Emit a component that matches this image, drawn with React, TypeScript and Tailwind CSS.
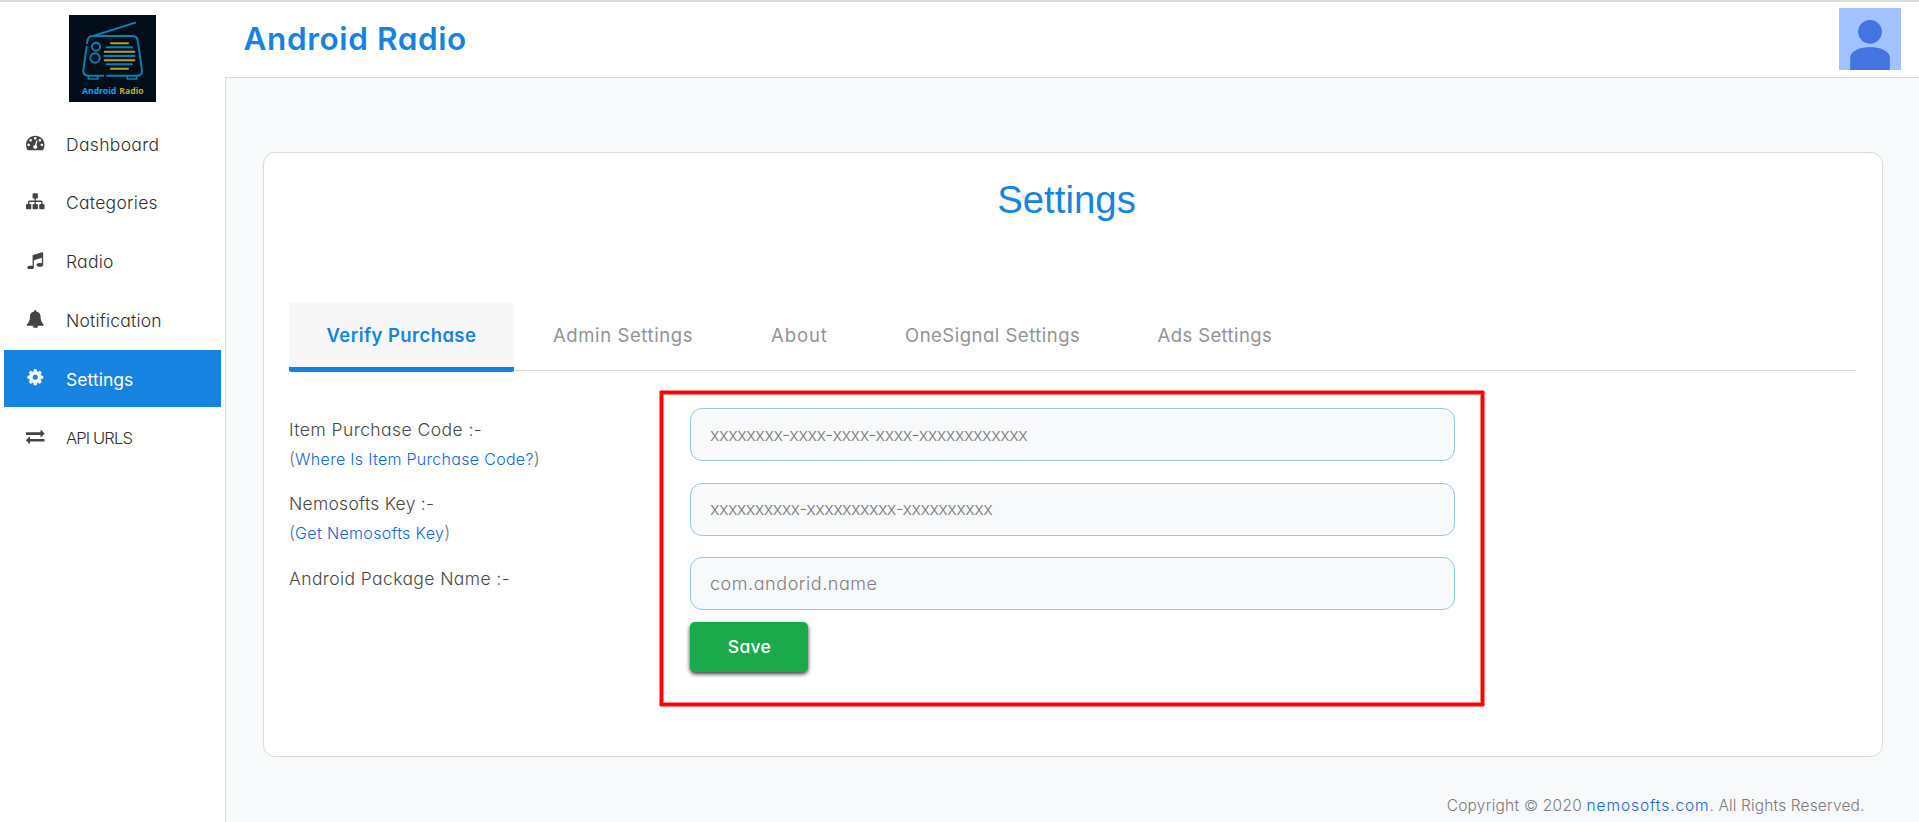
interface NavItem {
  label: string;
  track: string;
  icon: string;
  active?: boolean;
}

const NAV: NavItem[] = [
  { label: "Dashboard", track: "text-[17.500px] tracking-[0.33px]", icon: "M384 1152q0-53-37.5-90.5t-90.5-37.5-90.5 37.5-37.5 90.5 37.5 90.5 90.5 37.5 90.5-37.5 37.5-90.5zm192-448q0-53-37.5-90.5t-90.5-37.5-90.5 37.5-37.5 90.5 37.5 90.5 90.5 37.5 90.5-37.5 37.5-90.5zm428 481l101-382q6-26-7.5-48.5t-38.5-29.5-48 6.5-30 39.5l-101 382q-60 5-107 43.5t-63 98.5q-20 77 20 146t117 89 146-20 89-117q16-60-6-117t-72-91zm660-33q0-53-37.5-90.5t-90.5-37.5-90.5 37.5-37.5 90.5 37.5 90.5 90.5 37.5 90.5-37.5 37.5-90.5zm-640-640q0-53-37.5-90.5t-90.5-37.5-90.5 37.5-37.5 90.5 37.5 90.5 90.5 37.5 90.5-37.5 37.5-90.5zm448 192q0-53-37.5-90.5t-90.5-37.5-90.5 37.5-37.5 90.5 37.5 90.5 90.5 37.5 90.5-37.5 37.5-90.5zm320 448q0 261-141 483-19 29-54 29h-1402q-35 0-54-29-141-221-141-483 0-182 71-348t191-286 286-191 348-71 348 71 286 191 191 286 71 348z" },
  { label: "Categories", track: "text-[17.500px] tracking-[0.27px]", icon: "M1792 1248v320q0 40-28 68t-68 28h-320q-40 0-68-28t-28-68v-320q0-40 28-68t68-28h96v-192h-512v192h96q40 0 68 28t28 68v320q0 40-28 68t-68 28h-320q-40 0-68-28t-28-68v-320q0-40 28-68t68-28h96v-192h-512v192h96q40 0 68 28t28 68v320q0 40-28 68t-68 28h-320q-40 0-68-28t-28-68v-320q0-40 28-68t68-28h96v-192q0-52 38-90t90-38h512v-192h-96q-40 0-68-28t-28-68v-320q0-40 28-68t68-28h320q40 0 68 28t28 68v320q0 40-28 68t-68 28h-96v192h512q52 0 90 38t38 90v192h96q40 0 68 28t28 68z" },
  { label: "Radio", track: "text-[17.500px] tracking-[0.25px]", icon: "M1664 224v1120q0 50-34 89t-86 60.5-103.5 32-96.5 10.5-96.5-10.5-103.5-32-86-60.5-34-89 34-89 86-60.5 103.5-32 96.5-10.5q105 0 192 39v-537l-768 237v709q0 50-34 89t-86 60.5-103.5 32-96.5 10.5-96.5-10.5-103.5-32-86-60.5-34-89 34-89 86-60.5 103.5-32 96.5-10.5q105 0 192 39v-967q0-31 19-56.5t49-35.5l832-256q12-4 28-4 40 0 68 28t28 68z" },
  { label: "Notification", track: "text-[17.500px] tracking-[0.2px]", icon: "M912 1696q0-16-16-16-59 0-101.5-42.5t-42.5-101.5q0-16-16-16t-16 16q0 73 51.5 124.5t124.5 51.5q16 0 16-16zm816-288q0 52-38 90t-90 38h-448q0 106-75 181t-181 75-181-75-75-181h-448q-52 0-90-38t-38-90q50-42 91-88t85-119.5 74.5-158.5 50-206 19.5-260q0-152 117-282.5t307-158.5q-8-19-8-39 0-40 28-68t68-28 68 28 28 68q0 20-8 39 190 28 307 158.5t117 282.5q0 139 19.5 260t50 206 74.5 158.5 85 119.5 91 88z" },
  { label: "Settings", active: true, track: "text-[17.500px] tracking-[0.05px]", icon: "M1152 896q0-106-75-181t-181-75-181 75-75 181 75 181 181 75 181-75 75-181zm512-109v222q0 12-8 23t-20 13l-185 28q-19 54-39 91 35 50 107 138 10 12 10 25t-9 23q-27 37-99 108t-94 71q-12 0-26-9l-138-108q-44 23-91 38-16 136-29 186-7 28-36 28h-222q-14 0-24.5-8.5t-11.5-21.5l-28-184q-49-16-90-37l-141 107q-10 9-25 9-14 0-25-11-126-114-165-168-7-10-7-23 0-12 8-23 15-21 51-66.5t54-70.5q-27-50-41-99l-183-27q-13-2-21-12.5t-8-23.5v-222q0-12 8-23t19-13l186-28q14-46 39-92-40-57-107-138-10-12-10-24 0-10 9-23 26-36 98.5-107.5t94.5-71.5q13 0 26 10l138 107q44-23 91-38 16-136 29-186 7-28 36-28h222q14 0 24.5 8.5t11.5 21.5l28 184q49 16 90 37l142-107q9-9 24-9 13 0 25 10 129 119 165 170 7 8 7 22 0 12-8 23-15 21-51 66.5t-54 70.5q26 50 41 98l183 28q13 2 21 12.5t8 23.5z" },
  { label: "API URLS", track: "text-[16.500px] tracking-[-0.85px]", icon: "M1792 1184v192q0 13-9.5 22.5t-22.5 9.5h-1376v192q0 13-9.5 22.5t-22.5 9.5q-12 0-24-10l-319-320q-9-9-9-22 0-14 9-23l320-320q9-9 23-9 13 0 22.5 9.5t9.5 22.5v192h1376q13 0 22.5 9.5t9.5 22.5zm0-544q0 14-9 23l-320 320q-9 9-23 9-13 0-22.5-9.5t-9.5-22.5v-192h-1376q-13 0-22.5-9.5t-9.5-22.5v-192q0-13 9.5-22.5t22.5-9.5h1376v-192q0-14 9-23t23-9q12 0 24 10l319 319q9 9 9 23z" },
];

const TABS = [
  { label: "Admin Settings", cls: "w-[218px] tracking-[0.6px]" },
  { label: "About", cls: "w-[134px] tracking-[0.9px]" },
  { label: "OneSignal Settings", cls: "w-[252.500px] tracking-[0.5px]" },
  { label: "Ads Settings", cls: "tracking-[0.4px]" },
];

const FIELDS = [
  {
    label: "Item Purchase Code :-",
    labelCls: "tracking-[0.44px]",
    link: "Where Is Item Purchase Code?",
    linkCls: "tracking-[0.3px]",
    placeholder: "xxxxxxxx-xxxx-xxxx-xxxx-xxxxxxxxxxxx",
    inputCls: "tracking-[-0.49px]",
  },
  {
    label: "Nemosofts Key :-",
    labelCls: "tracking-[0.26px]",
    link: "Get Nemosofts Key",
    linkCls: "tracking-[0.35px]",
    placeholder: "xxxxxxxxxx-xxxxxxxxxx-xxxxxxxxxx",
    inputCls: "tracking-[-0.6px]",
  },
  {
    label: "Android Package Name :-",
    labelCls: "tracking-[0.4px]",
    placeholder: "com.andorid.name",
    inputCls: "tracking-[0.55px]",
  },
];

function Logo() {
  return (
    <svg className="size-[87px]" viewBox="0 0 261 261" fill="none" strokeLinecap="round">
      <rect width="261" height="261" fill="#010d19" />
      <g stroke="#0680b5" strokeWidth="6">
        <path d="M72 63L199 23" />
        <path d="M54 85l2-10q3-12 16-12h118q14 0 16 13l13 89q1 17-14 17h-91" />
        <path d="M103 182H58q-16 0-15-17l10-70" />
        <circle cx="81" cy="95" r="12" />
        <circle cx="78" cy="129" r="14" />
        <path d="M58 184v8h28v-8M175 184v8h28v-8" strokeWidth="5" />
        <path d="M113 97h76M106 123h91M113 148h76" />
      </g>
      <path d="M126 85h51M107 110h89M107 136h89M126 161h51" stroke="#b3a035" strokeWidth="6" />
      <text x="39" y="238" fontFamily="Noto Sans, sans-serif" fontWeight="700" fontSize="27" textLength="103" lengthAdjust="spacingAndGlyphs" fill="#05a3ee">
        Android
      </text>
      <text x="151" y="238" fontFamily="Noto Sans, sans-serif" fontWeight="700" fontSize="27" textLength="73" lengthAdjust="spacingAndGlyphs" fill="#b9a741">
        Radio
      </text>
    </svg>
  );
}

function Avatar() {
  return (
    <svg className="size-[62px]" viewBox="0 0 62 62">
      <rect width="62" height="62" fill="#a1c2fe" />
      <g fill="#4374e0">
        <circle cx="31" cy="23.8" r="11.9" />
        <path d="M11.2 62V49.5C11.2 43 22 39 31 39s19.8 4 19.8 10.500V62z" />
      </g>
    </svg>
  );
}

export default function App() {
  return (
    <div className="flex h-[822px] w-full overflow-hidden border-t-2 border-[#dcdce1] bg-white font-['Inter',sans-serif] [font-feature-settings:'cv11','ss03']">
      <aside className="flex w-[225px] shrink-0 flex-col">
        <div className="mt-[13px] ml-[69px] h-[87px]">
          <Logo />
        </div>
        <nav className="mt-[13px] flex flex-col gap-[1.8px] pr-1 pl-1">
          {NAV.map((item) => (
            <a
              key={item.label}
              className={
                "flex h-[57px] items-center pl-[22px] leading-[24px] " +
                (item.active ? "bg-[#1783e0] text-white" : "font-light text-[#303030]")
              }
            >
              <svg className="mb-[2px] size-[18.500px]" viewBox="0 0 1792 1792" fill={item.active ? "#ffffff" : "#444444"}>
                <path d={item.icon} />
              </svg>
              <span className={"ml-[21.500px] pt-[2px] " + item.track}>{item.label}</span>
            </a>
          ))}
        </nav>
      </aside>

      <main className="flex min-w-0 flex-1 flex-col">
        <header className="flex h-[75px] shrink-0 items-start justify-between pr-[18px] pl-[18.500px]">
          <h1 className="mt-[19px] text-[31.500px] leading-[36px] font-semibold tracking-[0.6px] text-[#1783e0]">Android Radio</h1>
          <div className="mt-[6px]">
            <Avatar />
          </div>
        </header>

        <div className="flex flex-1 flex-col border-t border-l border-[#d9dbe0] bg-[#f8f9fb]">
          <section className="mt-[74px] ml-[37px] h-[605px] w-[1620px] shrink-0 rounded-[12px] border border-[#d9dbe0] bg-white">
            <h2 className="mt-[17px] pr-[13px] text-center font-['Liberation_Sans',sans-serif] text-[38.400px] leading-[60px] text-[#1783e0]">
              Settings
            </h2>

            <div className="mt-[73px] ml-[25px] flex h-[68px] w-[1567px] items-start border-b border-[#dcdddf] text-[18.500px] leading-[64px] text-[#929496]">
              <div className="mr-[39px] h-[69px] w-[225px] shrink-0 rounded-[2px] border-b-[5px] border-[#1783e0] bg-[#f7f7f7] pl-[37.500px] font-semibold tracking-[0.43px] whitespace-nowrap text-[#1783e0]">
                Verify Purchase
              </div>
              {TABS.map((tab) => (
                <div key={tab.label} className={"shrink-0 whitespace-nowrap " + tab.cls}>
                  {tab.label}
                </div>
              ))}
            </div>

            <form className="relative mt-[37px] ml-[25px] w-[1166px]">
              <div className="flex flex-col gap-[21.500px]">
                {FIELDS.map((f) => (
                  <div key={f.label} className="flex h-[53px]">
                    <label className="w-[401px] shrink-0 pt-[6.500px] text-[17.500px] leading-[29px] font-light text-[#484848]">
                      <span className={"block " + f.labelCls}>{f.label}</span>
                      {f.link && (
                        <span className="block text-[#777]">
                          (<a className={"text-[16px] text-[#1068dc] " + f.linkCls}>{f.link}</a>)
                        </span>
                      )}
                    </label>
                    <input
                      placeholder={f.placeholder}
                      className={
                        "h-[53px] w-[765px] rounded-[12px] border border-[#98c6ee] bg-[#f8f9fb] pr-5 pb-px pl-[19px] text-[18px] font-light placeholder:text-[#808080] placeholder:opacity-100 " +
                        f.inputCls
                      }
                    />
                  </div>
                ))}
              </div>
              <button
                type="button"
                className="mt-[12px] ml-[401px] block h-[50px] w-[118px] rounded-[5px] bg-[#1aaa4b] pt-px pl-px text-[17.500px] font-medium tracking-[0.3px] text-white shadow-[0_2px_4px_rgba(0,0,0,0.8)]"
              >
                Save
              </button>
              <div className="pointer-events-none absolute top-[-18px] left-[370px] h-[317px] w-[826px] rounded-[2px] border border-[#ff8080] p-px">
                <div className="absolute inset-0 border-3 border-[#ff0000] shadow-[inset_0_0_0_1px_#ff8080]" />
              </div>
            </form>
          </section>

          <footer className="mt-[37px] pr-[54.500px] text-right text-[15.500px] leading-[24px] font-light whitespace-pre text-[#7c7c7c]">
            <span className="tracking-[0.23px]">Copyright © 2020 </span>
            <a className="tracking-[0.9px] text-[#1068dc]">nemosofts.com</a>
            <span className="tracking-[0.14px]">. All Rights Reserved.</span>
          </footer>
        </div>
      </main>
    </div>
  );
}
